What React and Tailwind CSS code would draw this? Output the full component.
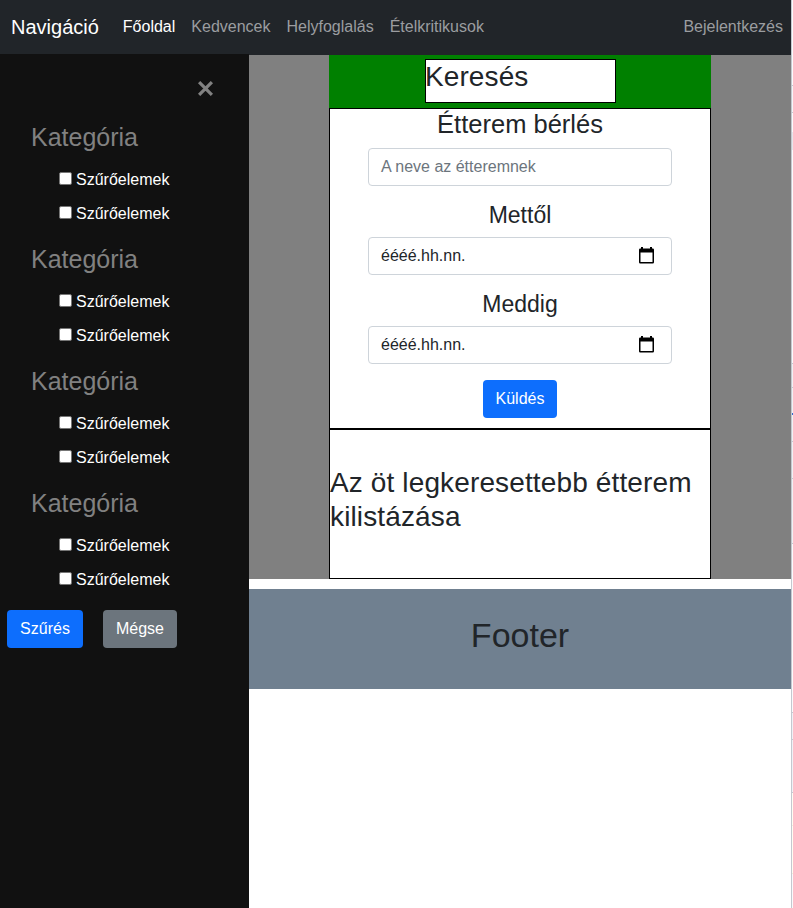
import React from "react";

const navLinks = ["Kedvencek", "Helyfoglalás", "Ételkritikusok"];

// Slices of the neighbouring panel visible past the page's right edge.
const edge = [
  ["h-[85px]", "bg-[#fafafb]"],
  ["h-px", "bg-[#c5c8d0]"],
  ["h-[26px]", "bg-[#f5f6f8]"],
  ["h-px", "bg-[#c5c8d0]"],
  ["h-[19px]", "bg-[#fafafb]"],
  ["h-[18px]", "bg-[#e6e7eb]"],
  ["h-[213px]", "bg-[#fafafb]"],
  ["h-px", "bg-[#c5c8d0]"],
  ["h-[23px]", "bg-[#f0f1f3]"],
  ["h-px", "bg-[#c5c8d0]"],
  ["h-[25px]", "bg-[#f0f1f3]"],
  ["h-[2px]", "bg-[#2f6bd0]"],
  ["h-[26px]", "bg-[#f0f1f3]"],
  ["h-px", "bg-[#c5c8d0]"],
  ["h-[36px]", "bg-[#f0f1f3]"],
  ["h-px", "bg-[#c5c8d0]"],
  ["h-[64px]", "bg-[#f0f1f3]"],
  ["h-px", "bg-[#c5c8d0]"],
  ["h-[168px]", "bg-[#fafafb]"],
  ["h-px", "bg-[#c5c8d0]"],
  ["h-[26px]", "bg-[#f0f1f5]"],
  ["h-px", "bg-[#c5c8d0]"],
  ["h-[52px]", "bg-[#f0f1f5]"],
  ["h-px", "bg-[#c5c8d0]"],
  ["h-[32px]", "bg-[#fffdf2]"],
  ["h-px", "bg-[#f3eedc]"],
  ["h-[47px]", "bg-[#fffdf2]"],
  ["h-px", "bg-[#f3eedc]"],
  ["h-[34px]", "bg-[#fafafb]"],
];

function Filter() {
  return (
    <label className="flex h-[34px] items-center pl-[59px] text-base text-white">
      <span className="mb-[3px] mr-[4px] h-[13px] w-[13px] rounded-[2px] border border-[#767676] bg-white" />
      <span>Szűrőelemek</span>
    </label>
  );
}

function Category() {
  return (
    <section className="h-[122px]">
      <h2 className="h-[46px] pl-[31px] text-[25px] leading-[40px] text-[#818181]">Kategória</h2>
      <Filter />
      <Filter />
    </section>
  );
}

function DateField({ label }) {
  return (
    <div className="h-[89px]">
      <h3 className="h-[35px] text-center text-[23px] leading-[26px]">{label}</h3>
      <div className="flex h-[38px] items-center justify-between rounded border border-[#ced4da] pl-3 pr-[17px]">
        <span>éééé.hh.nn.</span>
        <svg width="15" height="17" viewBox="0 0 15 17" className="mb-px">
          <path d="M2 0h2v1.5h7V0h2v1.5h.7Q15 1.5 15 2.8v12.4q0 1.3-1.3 1.3H1.3Q0 16.500 0 15.200V2.800Q0 1.500 1.300 1.500H2z" fill="#000" />
          <path d="M1.500 5.500h12v9.500h-12z" fill="#fff" />
        </svg>
      </div>
    </div>
  );
}

export default function App() {
  return (
    <div className="flex h-[908px] w-[793px] overflow-hidden bg-white font-['Liberation_Sans',Arial,sans-serif] text-base text-[#212529]">
      <div className="w-[791px]">
        <header className="flex h-[54px] items-center bg-[#212529] pl-[11px] pr-2 text-[#9b9da0]">
          <span className="mr-6 text-[20px] text-white">Navigáció</span>
          <nav className="flex gap-4">
            <span className="text-white">Főoldal</span>
            {navLinks.map((l) => <span key={l}>{l}</span>)}
          </nav>
          <span className="ml-auto">Bejelentkezés</span>
        </header>
        <div className="flex h-[854px]">
          <aside className="w-[249px] bg-[#111]">
            <div className="flex h-[63px] justify-end pr-[36px] pt-[27px]">
              <svg width="15" height="15" viewBox="0 0 15 15">
                <path d="M1.100 1.100l12.800 12.800M13.900 1.100l-12.800 12.800" stroke="#818181" strokeWidth="3.200" />
              </svg>
            </div>
            <Category />
            <Category />
            <Category />
            <Category />
            <div className="flex gap-5 pl-[7px] pt-[5px] text-white">
              <button className="h-[38px] w-[76px] rounded bg-[#0d6efd]">Szűrés</button>
              <button className="h-[38px] w-[74px] rounded bg-[#6c757d]">Mégse</button>
            </div>
          </aside>
          <main className="flex-1">
            <div className="h-px bg-[#212529]" />
            <div className="h-[524px] bg-[#808080] px-20">
              <div className="h-[53px] bg-[#008000] pl-24 pt-1">
                <h1 className="h-[44px] w-[191px] border border-black bg-white text-[28px] leading-[34px] tracking-[0.100px] -indent-px">Keresés</h1>
              </div>
              <form className="h-[321px] border border-black bg-white px-[38px]">
                <h2 className="h-[39px] text-center text-[25.500px] leading-[31px]">Étterem bérlés</h2>
                <div className="mb-4 flex h-[38px] items-center rounded border border-[#ced4da] pl-3 text-[#6c757d]">A neve az étteremnek</div>
                <DateField label="Mettől" />
                <DateField label="Meddig" />
                <button type="button" className="mx-auto block h-[38px] w-[74px] rounded bg-[#0d6efd] text-white">Küldés</button>
              </form>
              <section className="h-[150px] border border-black bg-white pt-[36px]">
                <h2 className="text-[28px] leading-[34px] tracking-[0.130px]">Az öt legkeresettebb étterem kilistázása</h2>
              </section>
            </div>
            <footer className="mt-2.5 h-[100px] bg-[#708090] pt-[25px] text-center text-[34px] leading-[42px]">Footer</footer>
          </main>
        </div>
      </div>
      <div className="w-px bg-[#c5c8d0]" />
      <div className="w-px">
        {edge.map(([h, c], i) => <div key={i} className={h + " " + c} />)}
      </div>
    </div>
  );
}
